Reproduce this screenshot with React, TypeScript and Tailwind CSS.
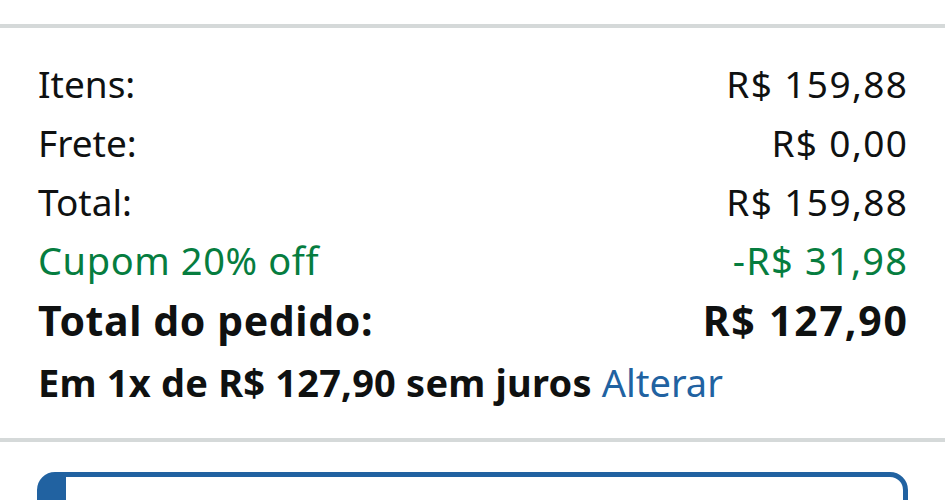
const rows = [
  { label: "Itens:", value: "R$ 159,88" },
  { label: "Frete:", value: "R$ 0,00" },
  { label: "Total:", value: "R$ 159,88" },
];

export default function App() {
  return (
    <div
      className="w-[945px] h-[500px] overflow-hidden bg-white text-[#0f1111]"
      style={{ fontFamily: '"Noto Sans", "Open Sans", sans-serif' }}
    >
      <div className="h-[24px]" />
      <div className="h-[4px] bg-[#d5d9d9]" />

      {/* Order summary */}
      <div className="px-[38px] pt-[26px] pb-[26px]">
        {rows.map((r) => (
          <div key={r.label} className="flex items-center justify-between h-[59px] text-[37px]">
            <span>{r.label}</span>
            <span className="tracking-[1.4px] -mr-[1.4px]">{r.value}</span>
          </div>
        ))}
        <div className="flex items-center justify-between h-[59px] text-[38px] text-[#067d3f]">
          <span className="tracking-[0.6px]">Cupom 20% off</span>
          <span className="tracking-[1.2px] -mr-[1.2px]">-R$ 31,98</span>
        </div>
        <div className="flex items-center justify-between h-[62px] text-[41px] font-bold">
          <span className="tracking-[0.6px]">Total do pedido:</span>
          <span className="tracking-[1.8px] -mr-[1.8px]">R$ 127,90</span>
        </div>
        <div className="flex items-center h-[60px] text-[38px]">
          <span className="font-bold tracking-[0.2px]">Em 1x de R$ 127,90 sem juros</span>
          <span className="ml-[10px] text-[#2162a1]">Alterar</span>
        </div>
      </div>

      <div className="h-[4px] bg-[#d5d9d9]" />

      <div className="px-[37px] pt-[30px]">
        <div className="h-[80px] rounded-[18px] border-[5px] border-l-[29px] border-[#2162a1] bg-white" />
      </div>
    </div>
  );
}
